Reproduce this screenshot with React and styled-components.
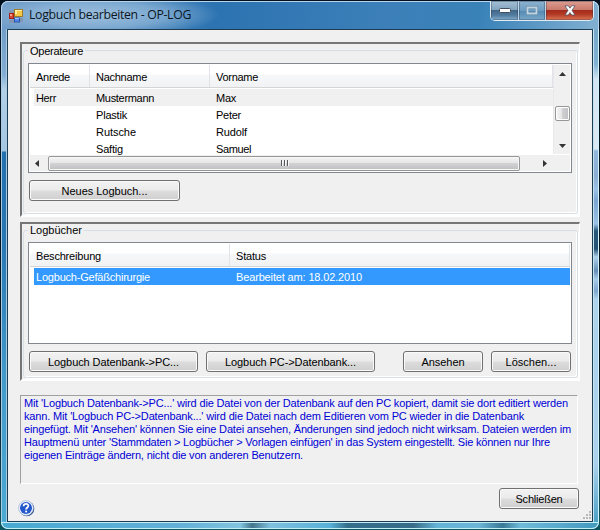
import React, { useLayoutEffect, useRef } from "react";
import styled, { createGlobalStyle } from "styled-components";

const Global = createGlobalStyle`
  * { box-sizing: border-box; }
  body { margin: 0; background: #06131f; overflow: hidden; }
`;

const Desktop = styled.div`
  width: 600px;
  height: 530px;
  background: linear-gradient(#02101f, #06131f 70%, #0d5560);
  padding: 1px 1px 1px 1px;
`;

const Window = styled.main`
  width: 598px;
  height: 528px;
  display: grid;
  grid-template-columns: 6px 1fr 6px;
  grid-template-rows: 28px 493px 7px;
  border-radius: 7px;
  overflow: hidden;
  background: #4ba5d2;
  box-shadow: inset 0 0 0 1px #c5dfee;
  font: 11px/13px "Liberation Sans", Arial, sans-serif;
  color: #000;
`;

const TitleBar = styled.header`
  grid-column: 1 / -1;
  display: flex;
  align-items: flex-start;
  justify-content: space-between;
  padding: 1px 4px 0 8px;
  border-radius: 7px 7px 0 0;
  border: 1px solid #b9d4e8;
  border-bottom: 0;
  background:
    radial-gradient(ellipse 120px 22px at 98px 13px, rgba(180, 207, 229, 0.75), rgba(165, 198, 225, 0.55) 55%, transparent),
    linear-gradient(100deg, #6f9cc8 0%, #4a86be 22%, #2c73b1 36%, #3d80b9 65%, #3982b8 80%, #82b0d2 100%);
`;

const TitleGroup = styled.div`
  display: flex;
  align-items: center;
  gap: 6px;
  height: 25px;
  margin-left: -1px;
`;

const Title = styled.h1`
  margin: 0;
  padding-bottom: 2px;
  font: 400 12.3px/16px "Open Sans", "Noto Sans", sans-serif;
  color: #0b1623;
`;

const Caption = styled.div`
  display: flex;
  width: 104px;
  height: 20px;
  margin-top: -2px;
  border: 1px solid #e0edf5;
  border-top: 0;
  border-radius: 0 0 5px 5px;
  overflow: hidden;
`;

const CaptionButton = styled.button`
  display: grid;
  place-items: center;
  width: ${(p) => p.$w}px;
  height: 19px;
  padding: 0;
  border: 0;
  border-right: ${(p) => (p.$last ? 0 : "1px solid #bdd5e5")};
  background: ${(p) =>
    p.$close
      ? "linear-gradient(#dc9d90 0, #c8796b 48%, #a62b1c 50%, #b23a26 70%, #dd7654)"
      : p.$muted
        ? "linear-gradient(#8eb3cf, #6d9dc1 50%, #5389b2 52%, #79a9c9)"
        : "linear-gradient(#a3bfd4 0, #83a4bf 48%, #42688a 50%, #527c9f 75%, #85afce)"};
  box-shadow: inset 0 0 0 1px rgba(35, 45, 65, 0.32);
`;

const LeftEdge = styled.div`
  border-left: 1px solid #a9cbe3;
  border-right: 1px solid #a5cce2;
  background: linear-gradient(#729dc8 0, #83add2 45px, #b4d0e7 60px, #a4c5e2 122px, #2470af 123px, #2876b2 210px, #439aca 350px, #4baad3);
`;

const RightEdge = styled.div`
  border-left: 1px solid #c4e5f2;
  border-right: 1px solid #d3f3fb;
  background: linear-gradient(#78a8ca 0, #82b2d2 35px, #d3e4f2 50px, #dce9f4 120px, #91b6dc 122px, #8dadd2 148px, #9cc2e5 160px, #7ba5d1 172px, #9bc1e4 195px, #27577a 202px, #265373 220px, #b0d1eb 228px, #668db6 242px, #a7cbe9 250px, #7fa5cd 262px, #acd2ec 270px, #abd1ec 435px, #4ba1c7);
`;

const BottomEdge = styled.footer`
  grid-column: 1 / -1;
  border: 1px solid #c3edf7;
  border-radius: 0 0 7px 7px;
  background: linear-gradient(90deg, #48a9d0, #64b0d7 30%, #82c4df 40%, #43758c 42%, #7ec0de 45%, #59b0d8 55%, #346f8c 58%, #386c88 69%, #65b3d5 73%, #6cb5d7 80%, #397998 84%, #6fbad9 87%, #4399be 100%);
`;

const Client = styled.section`
  display: flex;
  flex-direction: column;
  padding: 12px 12px 0;
  background: #f0f0f0;
  border: 1px solid #1d3c52;
  min-width: 0;
`;

const Panel = styled.section`
  display: flex;
  width: 560px;
  height: ${(p) => p.$h}px;
  flex: none;
  margin-bottom: ${(p) => p.$after}px;
  padding: 0 1px 1px 1px;
  border: solid;
  border-width: 2px 1px 2px 2px;
  border-color: #767676 #fff #fff #767676;
`;

const Group = styled.fieldset`
  width: 100%;
  min-width: 0;
  margin: 0;
  padding: ${(p) => p.$top}px 0 0 4px;
  border: 1px solid #d5dfe5;
  border-radius: 3px;
  box-shadow: inset -1px -1px #fff, 1px 1px #fff;
`;

const Legend = styled.legend`
  height: 13px;
  margin-left: 0;
  padding: ${(p) => p.$drop || 0}px 2px 0;
`;

const List = styled.div`
  width: 544px;
  height: ${(p) => p.$h}px;
  padding: 1px;
  border: 1px solid #828790;
  background: #fff;
`;

const ListTop = styled.div`
  display: flex;
  height: 90px;
`;

const Table = styled.div`
  flex: 1;
  min-width: 0;
  overflow: hidden;
`;

const columns = (p) => (p.$two ? "200px 1fr" : "60px 120px 1fr");

const HeaderRow = styled.div`
  display: grid;
  grid-template-columns: ${columns};
  height: 23px;
  border-bottom: 1px solid #d5d5d5;
  background: linear-gradient(#fff 0, #fff 9px, #f7f8fa 10px, #f1f2f4);
`;

const HeaderCell = styled.div`
  padding: 6px 0 0 6px;
  border-right: 1px solid #e0e3e7;
`;

const BodyRow = styled.div`
  display: grid;
  grid-template-columns: ${(p) => (p.$two ? "196px 1fr" : "56px 120px 1fr")};
  height: 17px;
  margin: ${(p) => (p.$first ? "1px 0 0 4px" : "0 0 0 4px")};
  padding-top: 3px;
  color: ${(p) => (p.$selected ? "#fff" : "#000")};
  background: ${(p) => (p.$selected ? "#3399ff" : p.$shaded ? "#f0f0f0" : "transparent")};
`;

const BodyCell = styled.div`
  padding-left: ${(p) => (p.$lead ? 2 : 6)}px;
  white-space: nowrap;
`;

const VScroll = styled.div`
  display: flex;
  flex-direction: column;
  align-items: center;
  width: 17px;
  height: 89px;
  padding: 7px 0 5px;
  border-left: 1px solid #e9e9e9;
  background: #f0f0f0;
`;

const VThumb = styled.div`
  width: 15px;
  height: 15px;
  margin: 30px 0 23px;
  flex: none;
  border: 1px solid #969696;
  border-radius: 2px;
  box-shadow: inset 0 0 0 1px #fff;
  background: linear-gradient(90deg, #f5f5f5, #e5e5e5 45%, #d0d0d2 50%, #bfc0c4);
`;

const HScroll = styled.div`
  display: flex;
  align-items: center;
  height: 16px;
  background: #f0f0f0;
  padding: 0 20px 0 5px;
`;

const HThumb = styled.div`
  display: flex;
  align-items: center;
  justify-content: center;
  gap: 2px;
  width: 472px;
  flex: none;
  height: 15px;
  margin: 0 23px 0 9px;
  border: 1px solid #969696;
  border-radius: 2px;
  box-shadow: inset 0 0 0 1px #f8f8f8;
  background: linear-gradient(#f4f4f4, #e6e6e6 45%, #d2d2d4 50%, #bebec2);
`;

const Grip = styled.i`
  width: 1px;
  height: 6px;
  background: #55585d;
  box-shadow: 1px 0 #f7f7f7;
`;

const Arrow = styled.svg`
  display: block;
  flex: none;
`;

const ButtonRow = styled.div`
  display: flex;
  gap: 8px;
  padding: 7px 0 0 1px;
`;

const Button = styled.button`
  width: ${(p) => p.$w}px;
  height: 21px;
  flex: none;
  margin-left: ${(p) => p.$push || 0}px;
  padding: 2px 0 0;
  border: 1px solid #707070;
  border-radius: 3px;
  box-shadow: inset 0 0 0 1px #fafafa;
  background: linear-gradient(#f2f2f2, #ebebeb 49%, #dddddd 51%, #cfcfcf);
  color: #000;
  font: inherit;
  white-space: nowrap;
`;

const Info = styled.section`
  width: 558px;
  height: 89px;
  flex: none;
  margin-top: 1px;
  padding: 1px 2px 0 3px;
  border: 1px solid;
  border-color: #a0a0a0 #fff #fff #a0a0a0;
  color: #0000d6;
`;

const InfoLine = styled.div`
  height: 13px;
  white-space: nowrap;
`;

const Footer = styled.div`
  display: flex;
  align-items: flex-start;
  justify-content: space-between;
  height: 36px;
  padding: 4px 0 0;
  margin-right: -12px;
`;

const HelpIcon = styled.svg`
  margin: 12px 0 0 -2px;
`;

const CloseGroup = styled.div`
  display: flex;
  align-items: flex-end;
  height: 32px;
`;

const CloseSlot = styled.div`
  height: 32px;
  margin-right: 4px;
`;

const TextRun = styled.span`
  display: inline-block;
  white-space: pre;
`;

/* Spreads the letters so a label takes the width given in pixels. */
function Label({ text, w }) {
  const ref = useRef(null);
  useLayoutEffect(() => {
    const el = ref.current;
    el.style.letterSpacing = "0px";
    const gap = (w - el.getBoundingClientRect().width) / text.length;
    el.style.letterSpacing = `${gap}px`;
  }, [text, w]);
  return <TextRun ref={ref}>{text}</TextRun>;
}

const people = [
  [["Herr", 20], ["Mustermann", 58], ["Max", 20]],
  [null, ["Plastik", 31], ["Peter", 25]],
  [null, ["Rutsche", 40], ["Rudolf", 31]],
  [null, ["Saftig", 27], ["Samuel", 35]],
];

const help = [
  ["Mit 'Logbuch Datenbank->PC...' wird die Datei von der Datenbank auf den PC kopiert, damit sie dort editiert werden", 544],
  ["kann. Mit 'Logbuch PC->Datenbank...' wird die Datei nach dem Editieren vom PC wieder in die Datenbank", 500],
  ["eingefügt. Mit 'Ansehen' können Sie eine Datei ansehen, Änderungen sind jedoch nicht wirksam. Dateien werden im", 547],
  ["Hauptmenü unter 'Stammdaten > Logbücher > Vorlagen einfügen' in das System eingestellt. Sie können nur Ihre", 526],
  ["eigenen Einträge ändern, nicht die von anderen Benutzern.", 279],
];

function Tri({ dir }) {
  const d = {
    up: "M0 4 4 0 8 4Z",
    down: "M0 0H8L4 4Z",
    left: "M4 0V8L0 4Z",
    right: "M0 0V8L4 4Z",
  }[dir];
  const tall = dir === "left" || dir === "right";
  return (
    <Arrow width={tall ? 4 : 7} height={tall ? 7 : 4} viewBox={tall ? "0 0 4 8" : "0 0 8 4"} preserveAspectRatio="none">
      <path d={d} fill="#343434" />
    </Arrow>
  );
}

function AppIcon() {
  return (
    <svg width="14" height="14" viewBox="0 0 14 14">
      <path d="M0 1H5V4H0ZM0 11H5V14H0ZM11 9H14V13H11Z" fill="#8296b4" />
      <rect x=".5" y="4.5" width="4" height="5" fill="#d54836" stroke="#a51e18" />
      <rect x="1" y="5" width="2" height="2" fill="#f3a28a" />
      <rect x="5.5" y=".5" width="8" height="7" fill="#f5c947" stroke="#9c7b27" />
      <path d="M6 1H13V2H8V5H6Z" fill="#fff0a3" />
      <rect x="5.5" y="9" width="5" height="4" fill="#5388e9" stroke="#2e54a9" />
      <path d="M6 9H10V10H6Z" fill="#a9c8ff" />
    </svg>
  );
}

function HelpMark() {
  return (
    <HelpIcon width="17" height="17" viewBox="0 0 17 17">
      <circle cx="8.8" cy="8.8" r="7.5" fill="#254783" />
      <circle cx="8" cy="8" r="7.4" fill="#f2f6ff" stroke="#9ab2d9" strokeWidth=".7" />
      <circle cx="8" cy="8" r="6" fill="#2457cb" />
      <path d="M5.6 6.2C5.7 3.1 10.5 3.2 10.3 6C10.2 7.6 8.1 7.5 8.1 9.5" fill="none" stroke="#fff" strokeWidth="1.8" />
      <rect x="7.2" y="10.6" width="1.9" height="1.8" fill="#fff" />
    </HelpIcon>
  );
}

function ResizeGrip() {
  return (
    <svg width="9" height="9" fill="#b9b9b9">
      <path d="M6 0H8V2H6ZM3 3H5V5H3ZM6 3H8V5H6ZM0 6H2V8H0ZM3 6H5V8H3ZM6 6H8V8H6Z" />
    </svg>
  );
}

export default function App() {
  return (
    <>
      <Global />
      <Desktop>
        <Window>
          <TitleBar>
            <TitleGroup>
              <AppIcon />
              <Title><Label text="Logbuch bearbeiten - OP-LOG" w={162} /></Title>
            </TitleGroup>
            <Caption>
              <CaptionButton $w={28} aria-label="Minimieren">
                <svg width="12" height="6"><rect x=".5" y=".5" width="11" height="4" rx="1" fill="#fff" stroke="#444e5c" /></svg>
              </CaptionButton>
              <CaptionButton $w={27} $muted aria-label="Maximieren">
                <svg width="12" height="9"><path d="M1.5 1.5H10.5V7.5H1.5Z" fill="none" stroke="#557b97" strokeWidth="3" /><path d="M1.5 1.5H10.5V7.5H1.5Z" fill="none" stroke="#bfd4e2" strokeWidth="2" /></svg>
              </CaptionButton>
              <CaptionButton $w={47} $close $last aria-label="Fenster schließen">
                <svg width="12" height="11" viewBox="0 0 12 11"><path d="M1 .8H4.3L6 3.2 7.7.8H11L8 5.4 11 10H7.7L6 7.6 4.3 10H1L4 5.4Z" fill="#fff" stroke="#535767" strokeWidth=".8" /></svg>
              </CaptionButton>
            </Caption>
          </TitleBar>
          <LeftEdge />
          <Client>
            <Panel $h={175} $after={5}>
              <Group $top={6}>
                <Legend $drop={1}><Label text="Operateure" w={53} /></Legend>
                <List $h={110}>
                  <ListTop>
                    <Table>
                      <HeaderRow>
                        <HeaderCell><Label text="Anrede" w={34} /></HeaderCell>
                        <HeaderCell><Label text="Nachname" w={51} /></HeaderCell>
                        <HeaderCell><Label text="Vorname" w={42} /></HeaderCell>
                      </HeaderRow>
                      {people.map((row, i) => (
                        <BodyRow key={i} $first={i === 0} $shaded={i === 0}>
                          {row.map((c, j) => (
                            <BodyCell key={j} $lead={j === 0}>{c && <Label text={c[0]} w={c[1]} />}</BodyCell>
                          ))}
                        </BodyRow>
                      ))}
                    </Table>
                    <VScroll><Tri dir="up" /><VThumb /><Tri dir="down" /></VScroll>
                  </ListTop>
                  <HScroll>
                    <Tri dir="left" />
                    <HThumb><Grip /><Grip /><Grip /></HThumb>
                    <Tri dir="right" />
                  </HScroll>
                </List>
                <ButtonRow>
                  <Button $w={151}><Label text="Neues Logbuch..." w={86} /></Button>
                </ButtonRow>
              </Group>
            </Panel>
            <Panel $h={159} $after={13}>
              <Group $top={5}>
                <Legend><Label text="Logbücher" w={52} /></Legend>
                <List $h={102}>
                  <HeaderRow $two>
                    <HeaderCell><Label text="Beschreibung" w={65} /></HeaderCell>
                    <HeaderCell><Label text="Status" w={30} /></HeaderCell>
                  </HeaderRow>
                  <BodyRow $two $first $selected>
                    <BodyCell $lead><Label text="Logbuch-Gefäßchirurgie" w={114} /></BodyCell>
                    <BodyCell><Label text="Bearbeitet am: 18.02.2010" w={126} /></BodyCell>
                  </BodyRow>
                </List>
                <ButtonRow>
                  <Button $w={169}><Label text="Logbuch Datenbank->PC..." w={131} /></Button>
                  <Button $w={169}><Label text="Logbuch PC->Datenbank..." w={131} /></Button>
                  <Button $w={80} $push={20}><Label text="Ansehen" w={43} /></Button>
                  <Button $w={80}><Label text="Löschen..." w={51} /></Button>
                </ButtonRow>
              </Group>
            </Panel>
            <Info>
              {help.map(([t, w]) => <InfoLine key={t}><Label text={t} w={w} /></InfoLine>)}
            </Info>
            <Footer>
              <HelpMark />
              <CloseGroup>
                <CloseSlot><Button $w={80}><Label text="Schließen" w={47} /></Button></CloseSlot>
                <ResizeGrip />
              </CloseGroup>
            </Footer>
          </Client>
          <RightEdge />
          <BottomEdge />
        </Window>
      </Desktop>
    </>
  );
}
